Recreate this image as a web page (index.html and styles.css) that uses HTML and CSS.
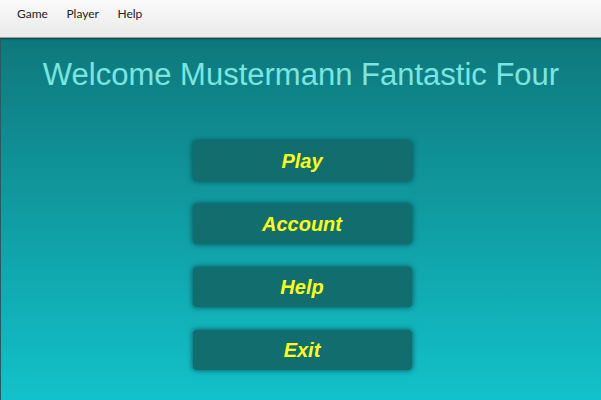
FILE: index.html
```html
<!DOCTYPE html>
<html>
<head>
<meta charset="utf-8">
<link rel="stylesheet" href="styles.css">
</head>
<body>
<div class="menubar">
  <span class="menu-item">Game</span>
  <span class="menu-item">Player</span>
  <span class="menu-item">Help</span>
</div>
<main class="content">
  <h1 class="title">Welcome Mustermann Fantastic Four</h1>
  <div class="buttons">
    <button class="btn">Play</button>
    <button class="btn">Account</button>
    <button class="btn">Help</button>
    <button class="btn">Exit</button>
  </div>
</main>
</body>
</html>
```
FILE: styles.css
```css
html, body {
  margin: 0;
  padding: 0;
  width: 601px;
  height: 400px;
  overflow: hidden;
}
body {
  display: flex;
  flex-direction: column;
  font-family: "Liberation Sans", Arial, sans-serif;
}
.menubar {
  height: 38px;
  flex: none;
  display: flex;
  align-items: center;
  padding-left: 17px;
  gap: 18.5px;
  background: linear-gradient(#fbfbfb, #e9e9e9);
  border-bottom: 1px solid #9a9a9a;
  box-shadow: 0 1px 2px rgba(0,0,0,0.45);
  position: relative;
  z-index: 1;
  box-sizing: border-box;
  padding-bottom: 10px;
}
.menu-item {
  font-family: Lato, "DejaVu Sans", sans-serif;
  font-size: 12px;
  color: #222;
}
.content {
  flex: 1;
  background: linear-gradient(#0e787c, #12c2ca);
  border-left: 1px solid #2c5a5c;
  display: flex;
  flex-direction: column;
  align-items: center;
}
.title {
  margin: 19px 0 0 0;
  font-weight: normal;
  font-size: 31px;
  line-height: 36px;
  color: #7ae6df;
}
.buttons {
  margin-top: 48px;
  display: flex;
  flex-direction: column;
  gap: 23px;
  margin-left: 2px;
}
.btn {
  width: 219px;
  height: 40px;
  border: none;
  border-radius: 4px;
  background: #116d6e;
  box-shadow: 0 0 5px 1px rgba(0,40,40,0.55);
  color: #ffff1a;
  font-family: "Liberation Sans", Arial, sans-serif;
  font-weight: bold;
  font-style: italic;
  font-size: 20px;
  padding: 0;
}
```
